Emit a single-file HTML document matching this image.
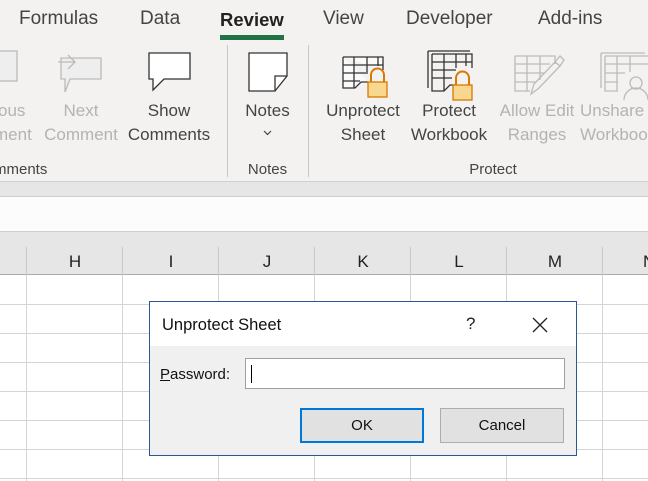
<!DOCTYPE html>
<html><head><style>
body{margin:0;width:648px;height:481px;overflow:hidden;position:relative;font-family:"Liberation Sans",sans-serif;background:#fff}
.a{position:absolute}
.t{position:absolute;white-space:nowrap;color:#444;font-size:17px;text-align:center}
.g{color:#b3b3b3}
.tab{position:absolute;top:8px;font-size:19px;color:#444}
.col{position:absolute;top:247px;height:28px;width:1px;background:#c8c8c8}
.vl{position:absolute;top:275px;height:206px;width:1px;background:#d4d4d4}
.hl{position:absolute;left:0;width:648px;height:1px;background:#d4d4d4}
.ch{position:absolute;top:252px;font-size:17px;color:#222;width:96px;text-align:center}
</style></head><body>
<div class="a" style="left:0;top:0;width:648px;height:181px;background:#f3f2f1"></div>
<div class="tab" style="left:19px">Formulas</div>
<div class="tab" style="left:140px">Data</div>
<div class="tab" style="left:220px;color:#222;font-weight:bold;font-size:18.5px;top:9px">Review</div>
<div class="a" style="left:220px;top:35px;width:64px;height:5px;background:#217346"></div>
<div class="tab" style="left:323px">View</div>
<div class="tab" style="left:406px">Developer</div>
<div class="tab" style="left:538px">Add-ins</div>
<div class="a" style="left:227px;top:45px;width:1px;height:132px;background:#c8c8c8"></div>
<div class="a" style="left:308px;top:45px;width:1px;height:132px;background:#c8c8c8"></div>
<svg class="a" style="left:0;top:45px" width="648" height="60" viewBox="0 45 648 60">
<g fill="none" stroke-width="1.3">
<rect x="-5" y="51" width="22" height="30" fill="#eee" stroke="#bbb"/>
<path d="M61 58 H101 V79 H70 L65 92 V79 H61 Z" fill="#eee" stroke="#bbb"/>
<path d="M58 62 H75 M68 55 L75 62 L68 69" stroke="#bbb"/>
<path d="M149 53 H190 V79 H164 L153 90 V79 H149 Z" fill="#fff" stroke="#333"/>
<path d="M249 53 H287 V76 L275 91 H249 Z" fill="#fff" stroke="#333"/>
<path d="M287 76 H275 V91" stroke="#333"/>
<g stroke="#333">
<path d="M343 57 H383 V70 M343 57 V88 H355 L361 82 H368" fill="#fafafa"/>
<path d="M343 65 H383 M343 73 H368 M343 81 H360 M354 57 V88 M367 57 V72 M378 57 V66"/>
<path d="M428 51 H470 M428 51 V88 M432 54 H472 V68 M432 54 V91 H444 L450 85 H456"/>
<path d="M432 62 H472 M432 70 H456 M432 78 H452 M444 54 V91 M456 54 V68 M466 54 V66"/>
</g>
<rect x="368" y="82" width="19" height="15" fill="#f8d78e" stroke="#d97a00"/>
<path d="M371 82 V75 A6.5 6.5 0 0 1 384 75 V82" stroke="#d97a00" stroke-width="2"/>
<rect x="453" y="85" width="19" height="15" fill="#f8d78e" stroke="#d97a00"/>
<path d="M456 85 V78 A6.5 6.5 0 0 1 469 78 V85" stroke="#d97a00" stroke-width="2"/>
<g stroke="#bbb">
<path d="M515 56 H555 V64 M515 56 V91 H530 M515 64 H550 M515 73 H545 M515 82 H535 M527 56 V91 M540 56 V80"/>
<path d="M531 94 L534 84 L555 62 L560 66 L539 88 Z M555 62 L560 56 L564 60 L560 66"/>
<path d="M601 53 H645 M601 53 V88 M605 56 H648 M605 56 V91 H618 M605 64 H648 M605 73 H625 M605 82 H618 M617 56 V91 M630 56 V72"/>
<circle cx="636" cy="83" r="6"/><path d="M624 100 A12 12 0 0 1 648 100"/>
</g>
</g></svg>
<div class="t g" style="left:-2px;top:99px;line-height:24px;text-align:left">ous<br><span style="margin-left:-4px">ment</span></div>
<div class="t g" style="left:40px;top:99px;line-height:24px;width:82px">Next<br>Comment</div>
<div class="t" style="left:123px;top:99px;line-height:24px;width:92px">Show<br>Comments</div>
<div class="t" style="left:240px;top:99px;line-height:24px;width:55px">Notes</div>
<svg class="a" style="left:263px;top:130px" width="9" height="6"><path d="M1 1 L4.5 4.5 L8 1" fill="none" stroke="#444" stroke-width="1.2"/></svg>
<div class="t" style="left:320px;top:99px;line-height:24px;width:86px">Unprotect<br>Sheet</div>
<div class="t" style="left:405px;top:99px;line-height:24px;width:88px">Protect<br>Workbook</div>
<div class="t g" style="left:494px;top:99px;line-height:24px;width:86px">Allow Edit<br>Ranges</div>
<div class="t g" style="left:580px;top:99px;line-height:24px;text-align:left">Unshare<br>Workbook</div>
<div class="t" style="left:-6px;top:161px;font-size:15px;text-align:left">mments</div>
<div class="t" style="left:240px;top:161px;font-size:15px;width:55px">Notes</div>
<div class="t" style="left:450px;top:161px;font-size:15px;width:86px">Protect</div>
<div class="a" style="left:0;top:181px;width:648px;height:16px;background:#e6e6e6;border-top:1px solid #d0d0d0;border-bottom:1px solid #d0d0d0;box-sizing:border-box"></div>
<div class="a" style="left:0;top:197px;width:648px;height:35px;background:#fcfcfc"></div>
<div class="a" style="left:0;top:231px;width:648px;height:44px;background:#e6e6e6;border-top:1px solid #d0d0d0;border-bottom:1px solid #ababab;box-sizing:border-box"></div>
<div class="col" style="left:26px"></div><div class="col" style="left:122px"></div><div class="col" style="left:218px"></div><div class="col" style="left:314px"></div><div class="col" style="left:410px"></div><div class="col" style="left:506px"></div><div class="col" style="left:602px"></div>
<div class="ch" style="left:27px">H</div><div class="ch" style="left:123px">I</div><div class="ch" style="left:219px">J</div><div class="ch" style="left:315px">K</div><div class="ch" style="left:411px">L</div><div class="ch" style="left:507px">M</div><div class="ch" style="left:603px;text-align:left;padding-left:40px">N</div>
<div class="vl" style="left:26px"></div><div class="vl" style="left:122px"></div><div class="vl" style="left:218px"></div><div class="vl" style="left:314px"></div><div class="vl" style="left:410px"></div><div class="vl" style="left:506px"></div><div class="vl" style="left:602px"></div>
<div class="hl" style="top:304px"></div><div class="hl" style="top:333px"></div><div class="hl" style="top:362px"></div><div class="hl" style="top:391px"></div><div class="hl" style="top:420px"></div><div class="hl" style="top:449px"></div><div class="hl" style="top:478px"></div>
<div class="a" style="left:149px;top:301px;width:428px;height:155px;border:1px solid #2b5797;box-sizing:border-box;background:#f0f0f0">
<div class="a" style="left:0;top:0;width:426px;height:44px;background:#fff"></div>
<div class="a" style="left:12px;top:14px;font-size:16.5px;color:#111">Unprotect Sheet</div>
<div class="a" style="left:316px;top:12px;font-size:17px;color:#222">?</div>
<svg class="a" style="left:382px;top:15px" width="16" height="16"><path d="M1 1 L15 15 M15 1 L1 15" stroke="#222" stroke-width="1.3"/></svg>
<div class="a" style="left:10px;top:64px;font-size:15px;color:#111"><u>P</u>assword:</div>
<div class="a" style="left:95px;top:56px;width:320px;height:31px;background:#fff;border:1px solid #a0a0a0;box-sizing:border-box"><div class="a" style="left:5px;top:6px;width:1px;height:18px;background:#000"></div></div>
<div class="a" style="left:150px;top:106px;width:124px;height:35px;background:#e1e1e1;border:2px solid #0078d7;box-sizing:border-box;text-align:center;line-height:31px;font-size:15px;color:#111">OK</div>
<div class="a" style="left:290px;top:106px;width:124px;height:35px;background:#e1e1e1;border:1px solid #adadad;box-sizing:border-box;text-align:center;line-height:33px;font-size:15px;color:#111">Cancel</div>
</div>
</body></html>
